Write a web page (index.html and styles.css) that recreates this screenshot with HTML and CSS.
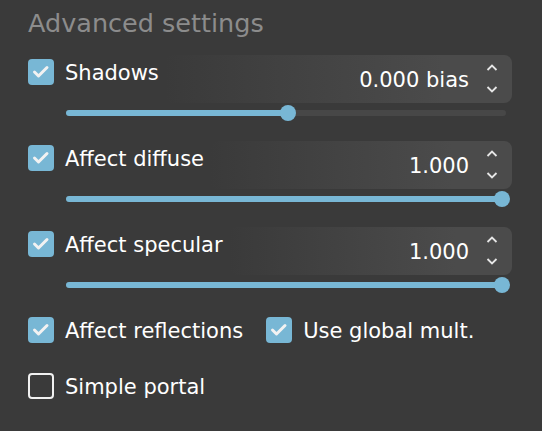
FILE: index.html
```html
<!DOCTYPE html>
<html lang="en">
<head>
<meta charset="utf-8">
<title>Advanced settings</title>
<link rel="stylesheet" href="styles.css">
</head>
<body>
<div class="panel">
  <div class="title">Advanced settings</div>

  <div class="setting">
    <div class="head">
      <label class="check">
        <span class="box on"><svg viewBox="0 0 26 26" width="26" height="26"><path d="M6.5 13 L10.5 17 L19 8.5"/></svg></span>
        <span class="text">Shadows</span>
      </label>
      <div class="spin">
        <span class="val">0.000 bias</span>
        <svg class="arrows" viewBox="0 0 12 48" width="12" height="48"><path d="M1.5 15 L6 10.5 L10.5 15 M1.5 32 L6 36.5 L10.5 32"/></svg>
      </div>
    </div>
    <div class="slider">
      <div class="fill" style="width: 50.5%"></div>
      <div class="range"><span class="thumb" style="left: 50.5%"></span></div>
    </div>
  </div>

  <div class="setting">
    <div class="head">
      <label class="check">
        <span class="box on"><svg viewBox="0 0 26 26" width="26" height="26"><path d="M6.5 13 L10.5 17 L19 8.5"/></svg></span>
        <span class="text">Affect diffuse</span>
      </label>
      <div class="spin">
        <span class="val">1.000</span>
        <svg class="arrows" viewBox="0 0 12 48" width="12" height="48"><path d="M1.5 15 L6 10.5 L10.5 15 M1.5 32 L6 36.5 L10.5 32"/></svg>
      </div>
    </div>
    <div class="slider">
      <div class="fill" style="width: 100%"></div>
      <div class="range"><span class="thumb" style="left: 100%"></span></div>
    </div>
  </div>

  <div class="setting">
    <div class="head">
      <label class="check">
        <span class="box on"><svg viewBox="0 0 26 26" width="26" height="26"><path d="M6.5 13 L10.5 17 L19 8.5"/></svg></span>
        <span class="text">Affect specular</span>
      </label>
      <div class="spin">
        <span class="val">1.000</span>
        <svg class="arrows" viewBox="0 0 12 48" width="12" height="48"><path d="M1.5 15 L6 10.5 L10.5 15 M1.5 32 L6 36.5 L10.5 32"/></svg>
      </div>
    </div>
    <div class="slider">
      <div class="fill" style="width: 100%"></div>
      <div class="range"><span class="thumb" style="left: 100%"></span></div>
    </div>
  </div>

  <div class="pair">
    <label class="check">
      <span class="box on"><svg viewBox="0 0 26 26" width="26" height="26"><path d="M6.5 13 L10.5 17 L19 8.5"/></svg></span>
      <span class="text">Affect reflections</span>
    </label>
    <label class="check">
      <span class="box on"><svg viewBox="0 0 26 26" width="26" height="26"><path d="M6.5 13 L10.5 17 L19 8.5"/></svg></span>
      <span class="text">Use global mult.</span>
    </label>
  </div>

  <div class="single">
    <label class="check">
      <span class="box off"></span>
      <span class="text">Simple portal</span>
    </label>
  </div>
</div>
</body>
</html>
```

FILE: styles.css
```css
html, body {
  margin: 0;
  padding: 0;
  background: #3a3a3a;
}

body {
  width: 542px;
  height: 431px;
  overflow: hidden;
  font-family: "DejaVu Sans", "Liberation Sans", sans-serif;
  color: #ffffff;
}

.panel {
  padding: 8px 30px 0 28px;
}

.title {
  font-size: 25.5px;
  line-height: 30px;
  color: #8c8c8c;
  margin-bottom: 17px;
}

.setting {
  margin-bottom: 25px;
}

.head {
  display: flex;
  align-items: flex-start;
  height: 48px;
}

.check {
  display: flex;
  align-items: center;
  gap: 11px;
  height: 26px;
  font-size: 21px;
  line-height: 26px;
  white-space: nowrap;
}

.check .text {
  padding-top: 1px;
}

.head .check {
  margin-top: 4px;
}

.box {
  width: 26px;
  height: 26px;
  border-radius: 4px;
  box-sizing: border-box;
  flex: none;
  display: block;
}

.box svg {
  display: block;
}

.box svg path {
  fill: none;
  stroke: #f2f2f2;
  stroke-width: 3;
  stroke-linecap: round;
  stroke-linejoin: round;
}

.box.on {
  background: #78b7d5;
}

.box.off {
  border: 2px solid #f0f0f0;
}

.spin {
  flex: 1;
  margin-left: 6px;
  height: 48px;
  border-radius: 8px;
  background: linear-gradient(to right, rgba(74, 74, 74, 0), #4b4b4b 80%);
  display: flex;
  align-items: center;
  justify-content: flex-end;
  font-size: 21px;
}

.val {
  padding-top: 2px;
  margin-right: 17px;
}

.arrows {
  display: block;
  margin-right: 14px;
}

.arrows path {
  fill: none;
  stroke: #e6e6e6;
  stroke-width: 1.8;
}

.slider {
  position: relative;
  margin: 7px 6px 0 38px;
  height: 6px;
  border-radius: 3px;
  background: #474747;
}

.fill {
  height: 100%;
  border-radius: 3px;
  background: #78b7d5;
}

.range {
  position: absolute;
  top: 0;
  bottom: 0;
  left: 4px;
  right: 4px;
}

.thumb {
  position: absolute;
  top: 50%;
  width: 16px;
  height: 16px;
  border-radius: 50%;
  background: #78b7d5;
  transform: translate(-50%, -50%);
}

.pair {
  display: flex;
  gap: 23px;
  margin-top: 29px;
}

.single {
  margin-top: 30px;
}
```
